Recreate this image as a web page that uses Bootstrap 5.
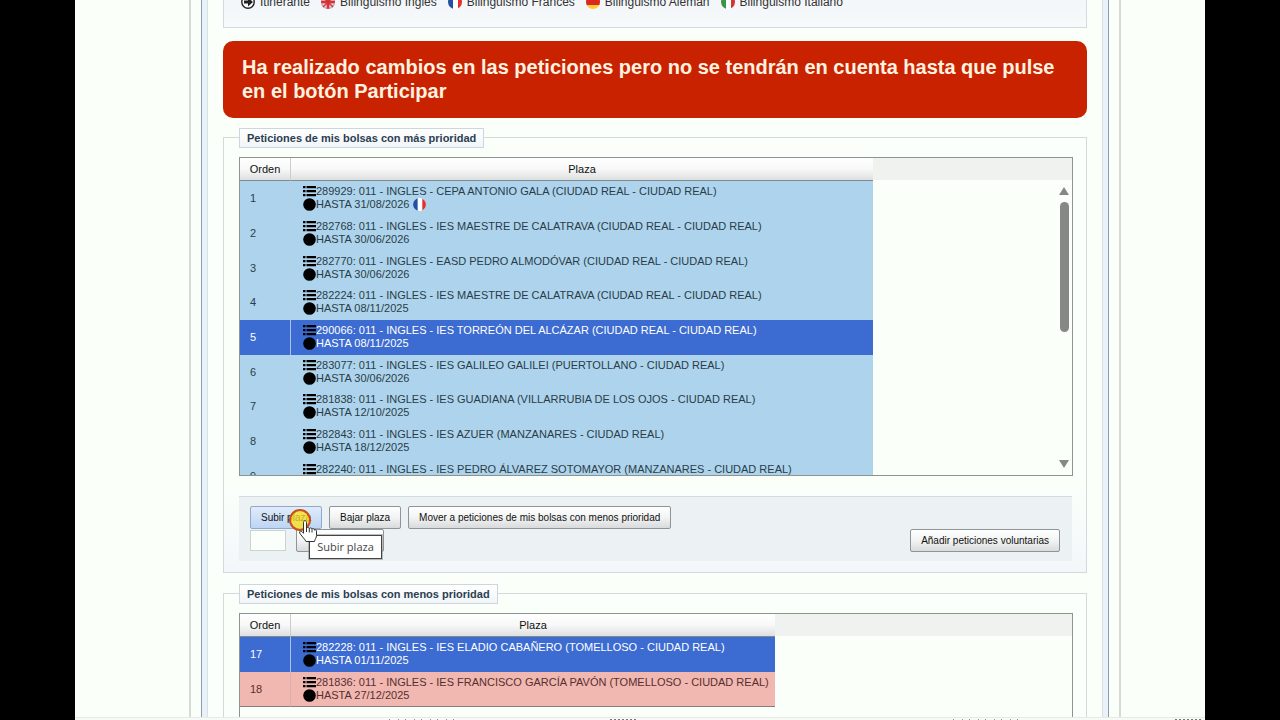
<!DOCTYPE html>
<html lang="es">
<head>
<meta charset="utf-8">
<meta name="viewport" content="width=device-width, initial-scale=1">
<title>Peticiones</title>
<link href="https://cdn.jsdelivr.net/npm/bootstrap@5.3.0/dist/css/bootstrap.min.css" rel="stylesheet">
<script src="https://cdn.jsdelivr.net/npm/bootstrap@5.3.0/dist/js/bootstrap.bundle.min.js"></script>
<style>
body{background:#000;font-family:"Liberation Sans",Arial,sans-serif;font-size:11px;line-height:13px;color:#2b3c48}
.screen{margin:0 75px;background:#fbfffa}
.sheet{margin:0 84px 0 114px;padding:0 10px;border:solid #d6dbd6;border-width:0 2px}
.frame{border:solid #8f9bb0;border-width:0 1px;padding:0 5px;background:#e9f1f9}
.inner-page{background:#fbfffa;border:solid #d9e0e2;border-width:0 1px;padding:0 15px}
.legend-box{height:28px;border:1px solid #d3dbde;border-top:0;background:linear-gradient(#f3f6fa,#f7fafa);padding-left:17px;font-size:12px;line-height:14px;color:#333}
.legend-box ul{margin-top:-5px;gap:11px}
.legend-box li{display:flex;gap:5px}
.legend-box svg{width:14px;height:14px}
.notice{margin-top:13px;height:77px;border-radius:10px;background:#c92200;color:#fff3e0;font-weight:700;font-size:20px;line-height:24px;padding:14px 19px}
.group{margin-top:20px;border:1px solid #d3dbda;padding:0 13px 11px 15px;background:linear-gradient(#fbfffa 80%,#f3f7fa)}
.notice+.group{margin-top:19px}
.group>h2{height:20px;line-height:18px;font-size:11px;font-weight:700;border:1px solid #ccd6dc;background:linear-gradient(#fff,#f1f5f9);color:#2c3e50;padding:0 7px;margin:-10px 0 9px;width:max-content}
.grid-box{border:1px solid #8d9490;background:#fbfffa;min-height:124px;overflow:hidden}
.grid-head{background:#eff2ee;height:22px}
.tbl{border-collapse:separate;border-spacing:0;width:633px}
.tbl.narrow{width:535px}
.tbl th{height:23px;padding:0;font-weight:400;color:#111;background:linear-gradient(#fff,#f8f8f8 50%,#dedfdf);border-bottom:1px solid #7f8a90;text-align:center}
.tbl th:first-child{width:51px;border-right:1px solid #ccc}
.tbl td{padding:4px 0 0 12px;height:35px;background:#add4ec;vertical-align:top;white-space:nowrap}
.tbl tr:nth-child(3n) td{height:34px}
.tbl td:first-child{padding:0 0 0 10px;vertical-align:middle;border-right:1px solid #b3d2e4}
.tbl tr.sel td{background:#3c6bd1;color:#fff}
.tbl tr.sel td:first-child{border-right-color:#a9c2ec}
.tbl tr.red td{background:#f1b7b1;color:#56302f;border-bottom:1px solid #8d7b7b}
.tbl tr.red td:first-child{border-right-color:#dcb0ac}
.tbl svg{width:13px;height:13px;display:block;flex:none;color:#000}
.list-wrap{height:319px;position:relative}
.bar-up,.bar-down{position:absolute;right:3px;width:10px;height:8px;background:#858885}
.bar-up{top:29px;clip-path:polygon(50% 0,100% 100%,0 100%)}
.bar-down{bottom:7px;clip-path:polygon(0 0,100% 0,50% 100%)}
.bar-thumb{position:absolute;right:3px;top:44px;width:9px;height:130px;border-radius:5px;background:#858885}
.tools{margin:20px 1px 0 0;height:65px;border-top:1px solid #d5dcdd;background:#ecf1f4;padding:9px 12px 0 11px}
.tool-row{gap:7px}
.tool-row+.tool-row{gap:10px}
.tool{height:23px;padding:0 10px;font-size:10px;line-height:21px;border:1px solid #8e9497;border-radius:2px;background:linear-gradient(#fff,#f2f3f3 50%,#d9dadb);color:#111;white-space:nowrap}
.tool.hot{background:linear-gradient(#dfecfb,#bdd5f4);border-color:#8fa9cc}
.tool.go-to{width:88px}
.pos-input{width:36px;height:21px;border:1px solid #cdd3d0;background:#fbfffa;padding:0 4px}
.tip{position:absolute;left:59px;top:6px;width:73px;height:24px;border:1px solid #444;outline:1px solid #8888;background:#fff;font:11px/22px "Open Sans",sans-serif;text-align:center;color:#444;z-index:2}
.pointer{position:absolute;left:38px;top:-21px;width:32px;height:40px;z-index:3;pointer-events:none}
.task-edge{position:fixed;left:75px;right:75px;bottom:0;height:3px;border-top:1px solid #e6ebe6;background:#f8faf8}
.task-edge i{position:absolute;bottom:0;width:70px;height:1px;background:repeating-linear-gradient(90deg,#888 0 1px,transparent 1px 9px,#999 9px 10px,transparent 10px 16px)}
.task-edge i:nth-child(even){background:linear-gradient(90deg,transparent 50%,#777 50%) 0/4px 1px}
.task-edge i:nth-child(even){width:30px}
</style>
</head>
<body class="overflow-hidden">
<svg class="position-absolute" width="0" height="0" aria-hidden="true">
<symbol id="list" viewBox="0 0 13 13"><path fill="currentColor" d="M0 1h2.500v2.200H0zM3.500 1H13v2.200H3.500zM0 5h2.500v2.200H0zM3.500 5H13v2.200H3.500zM0 9h2.500v2.200H0zM3.500 9H13v2.200H3.500z"/></symbol>
<symbol id="dot" viewBox="0 0 13 13"><circle cx="6.500" cy="6.500" r="6.300"/></symbol>
<clipPath id="disc"><circle cx="7" cy="7" r="7"/></clipPath>
<symbol id="fr" viewBox="0 0 14 14"><g clip-path="url(#disc)"><path fill="#fff" d="M0 0h14v14H0z"/><path fill="#2450a4" d="M0 0h5v14H0z"/><path fill="#e0322f" d="M10 0h4v14h-4z"/></g></symbol>
<symbol id="it" viewBox="0 0 14 14"><g clip-path="url(#disc)"><path fill="#fff" d="M0 0h14v14H0z"/><path fill="#409447" d="M0 0h5v14H0z"/><path fill="#d33436" d="M10 0h4v14h-4z"/></g></symbol>
<symbol id="de" viewBox="0 0 14 14"><g clip-path="url(#disc)"><path fill="#222" d="M0 0h14v5H0z"/><path fill="#d92a1e" d="M0 5h14v5H0z"/><path fill="#fc3" d="M0 10h14v4H0z"/></g></symbol>
<symbol id="uk" viewBox="0 0 14 14"><g clip-path="url(#disc)"><path fill="#6a6f9a" d="M0 0h14v14H0z"/><path stroke="#f6dada" stroke-width="3" d="M0 0l14 14M14 0L0 14"/><path stroke="#fff" stroke-width="5" d="M7 0v14M0 7h14"/><path stroke="#d5333a" stroke-width="3" d="M7 0v14M0 7h14"/><path stroke="#d5333a" stroke-width="1.500" d="M0 0l14 14M14 0L0 14"/></g></symbol>
<symbol id="go" viewBox="0 0 14 14"><circle cx="7" cy="7" r="6.200" fill="#fff" stroke="#222" stroke-width="1.400"/><path fill="#222" d="M3 5.500h4V2.500L12 7l-5 4.500v-3H3z"/></symbol>
</svg>
<div class="screen min-vh-100">
<div class="sheet"><div class="frame"><main class="inner-page">
<section class="legend-box d-flex align-items-start"><ul class="list-unstyled d-flex mb-0">
<li><svg><use href="#go"/></svg>Itinerante</li>
<li><svg><use href="#uk"/></svg>Bilingüismo Inglés</li>
<li><svg><use href="#fr"/></svg>Bilingüismo Francés</li>
<li><svg><use href="#de"/></svg>Bilingüismo Alemán</li>
<li><svg><use href="#it"/></svg>Bilingüismo Italiano</li>
</ul></section>
<div class="notice" role="status">Ha realizado cambios en las peticiones pero no se tendrán en cuenta hasta que pulse en el botón Participar</div>
<section class="group">
<h2>Peticiones de mis bolsas con más prioridad</h2>
<div class="grid-box list-wrap"><div class="grid-head">
<table class="tbl"><thead><tr><th>Orden</th><th>Plaza</th></tr></thead><tbody>
<tr><td>1</td><td><div class="d-flex"><svg><use href="#list"/></svg>289929: 011 - INGLES - CEPA ANTONIO GALA (CIUDAD REAL - CIUDAD REAL)</div><div class="d-flex"><svg><use href="#dot"/></svg>HASTA 31/08/2026<svg class="ms-1"><use href="#fr"/></svg></div></td></tr>
<tr><td>2</td><td><div class="d-flex"><svg><use href="#list"/></svg>282768: 011 - INGLES - IES MAESTRE DE CALATRAVA (CIUDAD REAL - CIUDAD REAL)</div><div class="d-flex"><svg><use href="#dot"/></svg>HASTA 30/06/2026</div></td></tr>
<tr><td>3</td><td><div class="d-flex"><svg><use href="#list"/></svg>282770: 011 - INGLES - EASD PEDRO ALMODÓVAR (CIUDAD REAL - CIUDAD REAL)</div><div class="d-flex"><svg><use href="#dot"/></svg>HASTA 30/06/2026</div></td></tr>
<tr><td>4</td><td><div class="d-flex"><svg><use href="#list"/></svg>282224: 011 - INGLES - IES MAESTRE DE CALATRAVA (CIUDAD REAL - CIUDAD REAL)</div><div class="d-flex"><svg><use href="#dot"/></svg>HASTA 08/11/2025</div></td></tr>
<tr class="sel"><td>5</td><td><div class="d-flex"><svg><use href="#list"/></svg>290066: 011 - INGLES - IES TORREÓN DEL ALCÁZAR (CIUDAD REAL - CIUDAD REAL)</div><div class="d-flex"><svg><use href="#dot"/></svg>HASTA 08/11/2025</div></td></tr>
<tr><td>6</td><td><div class="d-flex"><svg><use href="#list"/></svg>283077: 011 - INGLES - IES GALILEO GALILEI (PUERTOLLANO - CIUDAD REAL)</div><div class="d-flex"><svg><use href="#dot"/></svg>HASTA 30/06/2026</div></td></tr>
<tr><td>7</td><td><div class="d-flex"><svg><use href="#list"/></svg>281838: 011 - INGLES - IES GUADIANA (VILLARRUBIA DE LOS OJOS - CIUDAD REAL)</div><div class="d-flex"><svg><use href="#dot"/></svg>HASTA 12/10/2025</div></td></tr>
<tr><td>8</td><td><div class="d-flex"><svg><use href="#list"/></svg>282843: 011 - INGLES - IES AZUER (MANZANARES - CIUDAD REAL)</div><div class="d-flex"><svg><use href="#dot"/></svg>HASTA 18/12/2025</div></td></tr>
<tr><td>9</td><td><div class="d-flex"><svg><use href="#list"/></svg>282240: 011 - INGLES - IES PEDRO ÁLVAREZ SOTOMAYOR (MANZANARES - CIUDAD REAL)</div></td></tr>
</tbody></table></div>
<i class="bar-up"></i><i class="bar-thumb"></i><i class="bar-down"></i>
</div>
<div class="tools">
<div class="tool-row d-flex"><button class="tool hot" type="button">Subir plaza</button><button class="tool" type="button">Bajar plaza</button><button class="tool" type="button">Mover a peticiones de mis bolsas con menos prioridad</button></div>
<div class="tool-row d-flex align-items-center position-relative"><input class="pos-input" aria-label="Posición"><button class="tool go-to" type="button" aria-label="Mover a posición"></button><button class="tool ms-auto" type="button">Añadir peticiones voluntarias</button>
<div class="tip" role="tooltip">Subir plaza</div>
<svg class="pointer" viewBox="0 0 32 40" aria-hidden="true"><circle cx="12" cy="12" r="10" fill="#ffe01a" fill-opacity=".75" stroke="#c8501a" stroke-width="2"/><path d="M15.500 14.500c0-2.500 3-2.500 3 0v6c0-1.500 2.600-1.500 2.800.3.300-1.400 2.500-1.200 2.700.5.400-1.200 2.500-.9 2.500.8.400-.8 2-.4 2 1v4.500c0 2-1.500 3.500-2 5.900H18c-1.500-3-5-6-6.300-8.500-.8-1.800 1.300-2.500 2.500-1.200l1.300 1.500z" fill="#fff" stroke="#333"/><path d="M18.500 20v4M21.300 21v3.500M24 21.500v3" stroke="#333"/></svg></div>
</div>
</section>
<section class="group">
<h2>Peticiones de mis bolsas con menos prioridad</h2>
<div class="grid-box"><div class="grid-head">
<table class="tbl narrow"><thead><tr><th>Orden</th><th>Plaza</th></tr></thead><tbody>
<tr class="sel"><td>17</td><td><div class="d-flex"><svg><use href="#list"/></svg>282228: 011 - INGLES - IES ELADIO CABAÑERO (TOMELLOSO - CIUDAD REAL)</div><div class="d-flex"><svg><use href="#dot"/></svg>HASTA 01/11/2025</div></td></tr>
<tr class="red"><td>18</td><td><div class="d-flex"><svg><use href="#list"/></svg>281836: 011 - INGLES - IES FRANCISCO GARCÍA PAVÓN (TOMELLOSO - CIUDAD REAL)</div><div class="d-flex"><svg><use href="#dot"/></svg>HASTA 27/12/2025</div></td></tr>
</tbody></table></div></div>
</section>
</main></div></div></div>
<div class="task-edge" aria-hidden="true"><i style="left:27.8%"></i><i style="left:47.2%"></i><i style="left:77.7%"></i><i style="left:97.2%"></i></div>
</body>
</html>
